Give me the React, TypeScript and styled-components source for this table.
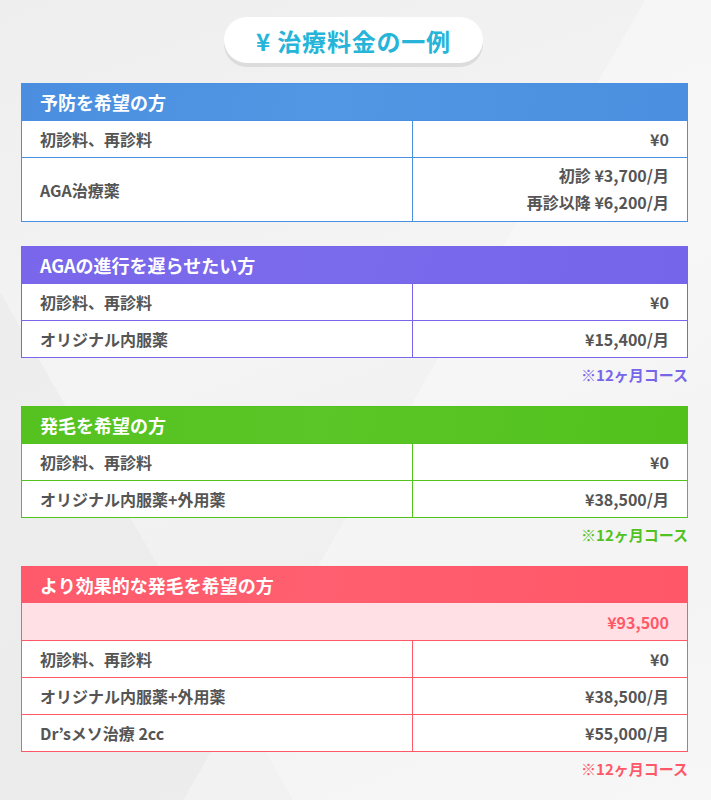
import React from 'react'
import styled, { createGlobalStyle } from 'styled-components'

const GlobalStyle = createGlobalStyle`
  html, body {
    margin: 0;
    padding: 0;
  }
  body {
    font-family: "Noto Sans CJK JP", "Noto Sans", sans-serif;
    background-color: #f1f1f1;
    background-image:
      linear-gradient(120deg, rgba(255,255,255,0) 55%, rgba(255,255,255,0.3) 55%),
      linear-gradient(60deg, rgba(232,232,232,0.5) 25%, rgba(255,255,255,0) 25%),
      linear-gradient(160deg, #eeeeee 0%, #f4f4f4 40%, #efefef 70%, #f3f3f3 100%);
    min-height: 800px;
  }
`

type Theme = {
  main: string
  head: string
  soft?: string
}

const themes: Record<string, Theme> = {
  blue: { main: '#4a90e2', head: 'linear-gradient(100deg, #4b8ee0 0%, #5197e3 45%, #4b8fe0 100%)' },
  purple: { main: '#7766ea', head: 'linear-gradient(100deg, #7a66ea 0%, #7a6bec 45%, #7565ea 100%)' },
  green: { main: '#52c21e', head: 'linear-gradient(100deg, #55c220 0%, #5ac627 45%, #52c11c 100%)' },
  red: { main: '#ff5868', head: 'linear-gradient(100deg, #ff5a6b 0%, #ff5f70 45%, #ff5767 100%)', soft: '#ffe1e5' },
}

type Row = { name: string; price: string[] }

type Plan = {
  title: string
  theme: Theme
  total?: string
  rows: Row[]
  note?: boolean
}

const plans: Plan[] = [
  {
    title: '予防を希望の方',
    theme: themes.blue,
    rows: [
      { name: '初診料、再診料', price: ['¥0'] },
      { name: 'AGA治療薬', price: ['初診 ¥3,700/月', '再診以降 ¥6,200/月'] },
    ],
  },
  {
    title: 'AGAの進行を遅らせたい方',
    theme: themes.purple,
    note: true,
    rows: [
      { name: '初診料、再診料', price: ['¥0'] },
      { name: 'オリジナル内服薬', price: ['¥15,400/月'] },
    ],
  },
  {
    title: '発毛を希望の方',
    theme: themes.green,
    note: true,
    rows: [
      { name: '初診料、再診料', price: ['¥0'] },
      { name: 'オリジナル内服薬+外用薬', price: ['¥38,500/月'] },
    ],
  },
  {
    title: 'より効果的な発毛を希望の方',
    theme: themes.red,
    total: '¥93,500',
    note: true,
    rows: [
      { name: '初診料、再診料', price: ['¥0'] },
      { name: 'オリジナル内服薬+外用薬', price: ['¥38,500/月'] },
      { name: 'Dr’sメソ治療 2cc', price: ['¥55,000/月'] },
    ],
  },
]

const App = () => {
  return (
    <Page>
      <GlobalStyle />
      <TitleWrap>
        <Title>¥ 治療料金の一例</Title>
      </TitleWrap>
      {plans.map((plan) => (
        <Block key={plan.title} $last={!plan.note}>
          <Table $c={plan.theme.main}>
            <Head $bg={plan.theme.head}>{plan.title}</Head>
            {plan.total ? (
              <Total $c={plan.theme.main} $bg={plan.theme.soft || '#fff'}>
                {plan.total}
              </Total>
            ) : null}
            {plan.rows.map((r) => (
              <RowLine key={r.name} $c={plan.theme.main}>
                <Name $c={plan.theme.main}>{r.name}</Name>
                <Price $tall={r.price.length > 1}>
                  {r.price.map((p) => (
                    <span key={p}>{p}</span>
                  ))}
                </Price>
              </RowLine>
            ))}
          </Table>
          {plan.note ? <Note $c={plan.theme.main}>※12ヶ月コース</Note> : null}
        </Block>
      ))}
    </Page>
  )
}

export default App

const Page = styled.div`
  width: 711px;
  box-sizing: border-box;
  padding: 17px 23px 0 21px;
  display: flex;
  flex-direction: column;
`
const TitleWrap = styled.div`
  display: flex;
  justify-content: center;
  margin-bottom: 20px;
  padding-right: 2px;
`
const Title = styled.h2`
  margin: 0;
  width: 259px;
  height: 46px;
  box-sizing: border-box;
  border-radius: 23px;
  background-color: #fff;
  box-shadow: 0 4px 0 #dcdcdc;
  display: flex;
  align-items: center;
  justify-content: center;
  font-size: 24px;
  font-weight: 700;
  color: #27b4d9;
  letter-spacing: 0.8px;
  white-space: pre;
`
const Block = styled.div<{ $last: boolean }>`
  display: flex;
  flex-direction: column;
  margin-bottom: ${(p) => (p.$last ? '24px' : '0')};
`
const Table = styled.div<{ $c: string }>`
  border: 1px solid ${(p) => p.$c};
  background-color: #fff;
  display: flex;
  flex-direction: column;
`
const Head = styled.div<{ $bg: string }>`
  height: 36px;
  display: flex;
  align-items: center;
  padding-left: 18px;
  background: ${(p) => p.$bg};
  color: #fff;
  font-size: 18px;
  font-weight: 700;
`
const Total = styled.div<{ $c: string; $bg: string }>`
  height: 37px;
  display: flex;
  align-items: center;
  justify-content: flex-end;
  padding-right: 18px;
  background-color: ${(p) => p.$bg};
  color: ${(p) => p.$c};
  font-size: 16px;
  font-weight: 700;
`
const RowLine = styled.div<{ $c: string }>`
  display: grid;
  grid-template-columns: 391px 1fr;
  border-top: 1px solid ${(p) => p.$c};
`
const Name = styled.div<{ $c: string }>`
  border-right: 1px solid ${(p) => p.$c};
  display: flex;
  align-items: center;
  padding-left: 18px;
  color: #555;
  font-size: 16px;
  font-weight: 700;
`
const Price = styled.div<{ $tall: boolean }>`
  min-height: 36px;
  padding: ${(p) => (p.$tall ? '4px 18px 5px 0' : '0 18px 0 0')};
  display: flex;
  flex-direction: column;
  align-items: flex-end;
  justify-content: center;
  color: #555;
  font-size: 16px;
  font-weight: 700;
  line-height: ${(p) => (p.$tall ? '27px' : '36px')};
`
const Note = styled.div<{ $c: string }>`
  text-align: right;
  margin: 8px 0 22px;
  font-size: 15px;
  font-weight: 700;
  line-height: 18px;
  color: ${(p) => p.$c};
`
